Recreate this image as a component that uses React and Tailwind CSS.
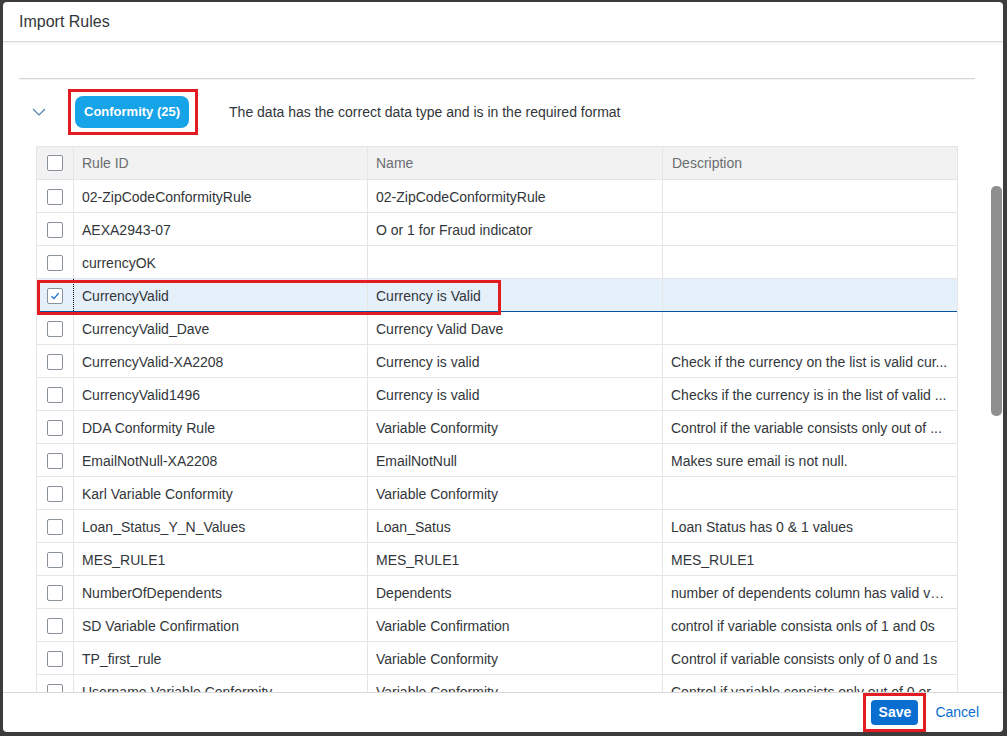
import React from "react";

const rows = [
  ["02-ZipCodeConformityRule", "02-ZipCodeConformityRule", ""],
  ["AEXA2943-07", "O or 1 for Fraud indicator", ""],
  ["currencyOK", "", ""],
  ["CurrencyValid", "Currency is Valid", "", true],
  ["CurrencyValid_Dave", "Currency Valid Dave", ""],
  ["CurrencyValid-XA2208", "Currency is valid", "Check if the currency on the list is valid cur..."],
  ["CurrencyValid1496", "Currency is valid", "Checks if the currency is in the list of valid ..."],
  ["DDA Conformity Rule", "Variable Conformity", "Control if the variable consists only out of ..."],
  ["EmailNotNull-XA2208", "EmailNotNull", "Makes sure email is not null."],
  ["Karl Variable Conformity", "Variable Conformity", ""],
  ["Loan_Status_Y_N_Values", "Loan_Satus", "Loan Status has 0 & 1 values"],
  ["MES_RULE1", "MES_RULE1", "MES_RULE1"],
  ["NumberOfDependents", "Dependents", "number of dependents column has valid va..."],
  ["SD Variable Confirmation", "Variable Confirmation", "control if variable consista onls of 1 and 0s"],
  ["TP_first_rule", "Variable Conformity", "Control if variable consists only of 0 and 1s"],
  ["Username Variable Conformity", "Variable Conformity", "Control if variable consists only out of 0 or..."],
];

function Checkbox({ checked }) {
  return (
    <div className="w-[16px] h-[16px] border border-[#89919a] rounded-[2px] bg-white flex items-center justify-center">
      {checked && (
        <svg width="10" height="10" viewBox="0 0 10 10">
          <path d="M1.5 5.2 L4 7.6 L8.6 2.2" fill="none" stroke="#0a6ed1" strokeWidth="1.3" />
        </svg>
      )}
    </div>
  );
}

export default function App() {
  const font = { fontFamily: '"Liberation Sans", Arial, sans-serif' };
  return (
    <div className="w-[1007px] h-[736px] bg-[#3c3c3c] pt-[2px] pl-[3px]" style={font}>
      <div className="w-[1000px] h-[730px] bg-white rounded-[4px] flex flex-col overflow-hidden">
        {/* Header */}
        <div className="h-[40px] shrink-0 flex items-center pl-[16px] border-b border-[#d9d9d9] shadow-[0_1px_2px_rgba(0,0,0,0.08)] text-[16px] text-[#32363a]">
          Import Rules
        </div>
        {/* Body */}
        <div className="flex-1 flex min-h-0">
          <div className="flex-1 overflow-hidden pl-[16px] pr-[16px] pt-[36px]">
            <div className="border-t border-[#d5d5d5] shadow-[0_1px_1px_rgba(0,0,0,0.06)]" />
            <div className="mt-[9px] h-[48px] flex items-center">
              <svg className="ml-[13px]" width="14" height="8" viewBox="0 0 14 8">
                <path d="M1 1 L7 7 L13 1" fill="none" stroke="#4d7fb5" strokeWidth="1.1" />
              </svg>
              <div className="ml-[22px] border-[3px] border-[#e31b23] pl-[4px] pr-[6px] py-[4px]">
                <div className="h-[32px] px-[9px] rounded-[8px] bg-[#16a3e8] text-white font-bold text-[13px] flex items-center">
                  Conformity (25)
                </div>
              </div>
              <div className="ml-[31px] text-[14px] text-[#32363a]">
                The data has the correct data type and is in the required format
              </div>
            </div>
            {/* Table */}
            <div className="relative mt-[10px] ml-[17px] w-[922px] border-l border-r border-[#e5e5e5] text-[14px] text-[#32363a]">
              <div className="grid grid-cols-[37px_294px_295px_294px] h-[34px] bg-[#f2f2f2] border-b border-t border-[#e5e5e5] text-[#6a6d70]">
                <div className="flex items-center justify-center border-r border-[#e5e5e5]">
                  <Checkbox />
                </div>
                <div className="flex items-center px-[8px] border-r border-[#e5e5e5]">Rule ID</div>
                <div className="flex items-center px-[8px] border-r border-[#e5e5e5]">Name</div>
                <div className="flex items-center px-[9px]">Description</div>
              </div>
              {rows.map((r, i) => (
                <div
                  key={i}
                  className={
                    "grid grid-cols-[37px_294px_295px_294px] h-[33px] border-b " +
                    (r[3] ? "bg-[#e5f0fa] border-[#0854a0]" : "bg-white border-[#e5e5e5]")
                  }
                >
                  <div
                    className={
                      "flex items-center justify-center border-r pt-[1px] " +
                      (r[3] ? "border-dotted border-[#000]" : "border-[#e5e5e5]")
                    }
                  >
                    <Checkbox checked={r[3]} />
                  </div>
                  <div className="flex items-center px-[8px] pt-[3px] border-r border-[#e5e5e5] whitespace-nowrap overflow-hidden">{r[0]}</div>
                  <div className="flex items-center px-[8px] pt-[3px] border-r border-[#e5e5e5] whitespace-nowrap overflow-hidden">{r[1]}</div>
                  <div className="flex items-center px-[8px] pt-[3px] whitespace-nowrap overflow-hidden">
                    <span className="truncate">{r[2]}</span>
                  </div>
                </div>
              ))}
              <div className="absolute left-[0px] top-[134px] w-[464px] h-[35px] border-[3px] border-[#e31b23] pointer-events-none" />
            </div>
          </div>
          {/* Scrollbar */}
          <div className="w-[12px] shrink-0 pr-[1px]">
            <div className="mt-[144px] h-[230px] w-[11px] rounded-[5px] bg-[#8f8f8f]" />
          </div>
        </div>
        {/* Footer */}
        <div className="h-[40px] shrink-0 border-t border-[#d9d9d9] flex items-stretch justify-end pr-[24px]">
          <div className="border-[3px] border-[#e31b23] px-[5px] flex items-center">
            <div className="h-[25px] w-[47px] rounded-[4px] bg-[#0a6ed1] text-white font-bold text-[14px] flex items-center justify-center">
              Save
            </div>
          </div>
          <div className="ml-[9px] flex items-center text-[14px] text-[#0a6ed1]">Cancel</div>
        </div>
      </div>
    </div>
  );
}
